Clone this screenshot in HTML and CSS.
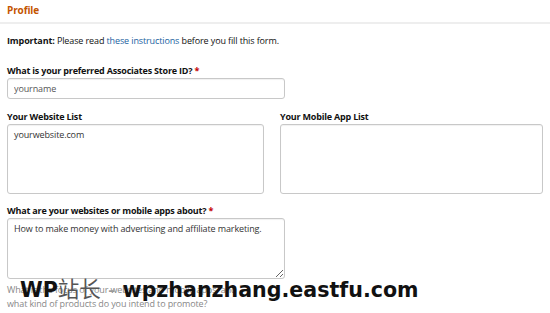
FILE: index.html
```html
<!DOCTYPE html>
<html>
<head>
<meta charset="UTF-8">
<title>Profile</title>
<link rel="stylesheet" href="styles.css">
</head>
<body>
	<div class="page-head">
		<h2 class="page-title">Profile</h2>
	</div>

	<div class="form">
		<p class="notice"><b>Important:</b> Please read <a href="#">these instructions</a> before you fill this form.</p>

		<div class="field field-short field-first">
			<label>What is your preferred Associates Store ID? <span class="req">*</span></label>
			<input type="text" class="txt" value="yourname">
		</div>

		<div class="row">
			<div class="field">
				<label>Your Website List</label>
				<textarea class="area area-list">yourwebsite.com</textarea>
			</div>
			<div class="field">
				<label>Your Mobile App List</label>
				<textarea class="area area-list"></textarea>
			</div>
		</div>

		<div class="field field-short">
			<label>What are your websites or mobile apps about? <span class="req">*</span></label>
			<textarea class="area area-about">How to make money with advertising and affiliate marketing.</textarea>
			<p class="hint">What is the focus of your websites and mobile apps, and<br>what kind of products do you intend to promote?</p>
		</div>
	</div>

	<div class="watermark">WP<span class="cjk">站长</span> <span class="dash">-</span> wpzhanzhang.eastfu.com</div>
</body>
</html>
```

FILE: styles.css
```css
body{
	margin: 0;
	background: #fff;
	font-family: "Open Sans", "Noto Sans", sans-serif;
	font-size: 9px;
	letter-spacing: -0.12px;
	color: #111;
	position: relative;
	height: 313px;
	overflow: hidden;
}

.page-head{
	height: 22px;
	border-bottom: 2px solid #eeeeee;
	padding-left: 7px;
}

.page-title{
	margin: 0;
	padding-top: 3px;
	font-size: 10px;
	font-weight: 700;
	color: #c45500;
}

.form{
	padding: 0 7px;
}

.notice{
	margin: 11px 0 0 0;
	line-height: 12px;
}

.notice a{
	color: #2162a1;
	text-decoration: none;
}

.field{
	display: flex;
	flex-direction: column;
}

.field label{
	font-weight: 700;
	letter-spacing: -0.2px;
	line-height: 12px;
	margin-bottom: 1px;
}

.field-short{
	width: 278px;
	margin-top: 11px;
}

.field-first{
	margin-top: 18px;
}

.req{
	color: #c40000;
}

.txt, .area{
	box-sizing: border-box;
	border: 1px solid #c8c8c8;
	border-radius: 3px;
	box-shadow: inset 0 1px 1px rgba(0,0,0,0.06);
	font-family: "Open Sans", "Noto Sans", sans-serif;
	font-size: 9px;
	letter-spacing: -0.12px;
	color: #333;
	padding: 4px 6px;
	margin: 0;
	background: #fff;
}

.txt{
	height: 21px;
	color: #555;
}

.row{
	display: grid;
	grid-template-columns: 257px 263px;
	column-gap: 16px;
	margin-top: 12px;
}

.area{
	resize: none;
	line-height: 12px;
}

.area-list{
	height: 70px;
}

.area-about{
	height: 61px;
	resize: vertical;
}

.hint{
	margin: 4px 0 0 0;
	color: #888;
	line-height: 14px;
}

.watermark{
	position: absolute;
	left: 20px;
	top: 277px;
	line-height: 1;
	font-family: "DejaVu Sans", "Noto Sans CJK SC", sans-serif;
	font-weight: 700;
	font-size: 20.6px;
	letter-spacing: 0;
	color: #111;
	white-space: nowrap;
}

.cjk{
	font-family: "Noto Sans CJK SC", sans-serif;
	font-weight: 400;
	font-size: 21.5px;
	color: #555;
}

.dash{
	font-weight: 400;
	color: #999;
}
```
